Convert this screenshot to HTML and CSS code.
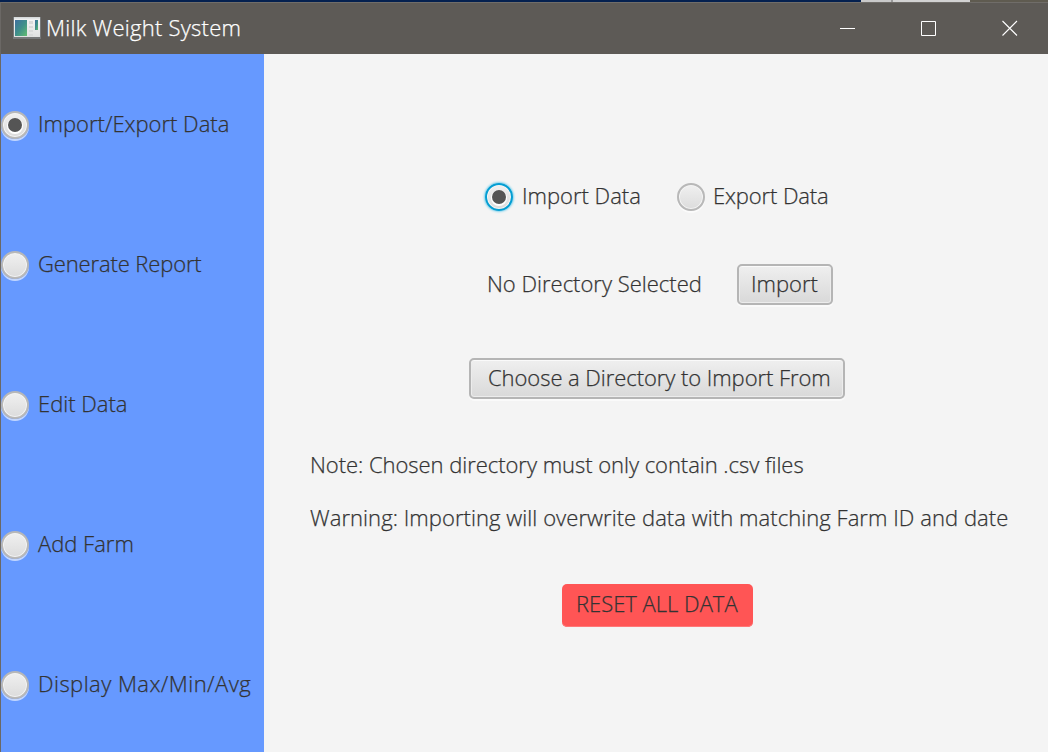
FILE: index.html
```html
<!DOCTYPE html>
<html lang="en">
<head>
<meta charset="utf-8">
<title>Milk Weight System</title>
<link rel="stylesheet" href="styles.css">
</head>
<body>
<div class="desktop-strip"><i class="strip-navy"></i><i class="strip-light"></i><i class="strip-edge"></i><i class="strip-pale"></i><i class="strip-dark"></i></div>
<header class="titlebar">
  <svg class="app-icon" width="28" height="24" viewBox="0 0 28 24">
    <defs>
      <linearGradient id="screen" x1="0" y1="0" x2="1" y2="1"><stop offset="0" stop-color="#3f6f9f"/><stop offset=".5" stop-color="#3f8f8b"/><stop offset="1" stop-color="#62bd70"/></linearGradient>
      <linearGradient id="frame" x1="0" y1="0" x2="0" y2="1"><stop offset="0" stop-color="#cfd3d5"/><stop offset=".15" stop-color="#f4f5f5"/><stop offset="1" stop-color="#e0e1e1"/></linearGradient>
    </defs>
    <rect x="0" y="1" width="28" height="22" fill="#77797a"/>
    <rect x="1" y="1" width="26" height="20" fill="url(#frame)"/>
    <rect x="2" y="4" width="12" height="16" fill="url(#screen)"/>
    <path d="M16 5h4v3h-4zM16 10h4v2h-4zM16 14h4v2h-4zM16 18h4v2h-4z" fill="#d9dbdb"/>
    <rect x="22" y="4" width="3" height="10" fill="url(#screen)"/>
  </svg>
  <span class="title">Milk Weight System</span>
  <div class="controls">
    <svg width="16" height="16" viewBox="0 0 16 16"><path d="M0 8.5h15" stroke="#fff" fill="none"/></svg>
    <svg width="16" height="16" viewBox="0 0 16 16"><path d="M.5 1.5h14v14H.5z" stroke="#fff" fill="none"/></svg>
    <svg width="16" height="16" viewBox="0 0 16 16"><path d="M.5 1l14.5 14.5M15 1L.5 15.5" stroke="#fff" stroke-width="1.1" fill="none"/></svg>
  </div>
</header>
<div class="window-body">
  <nav class="sidebar">
    <label class="option"><span class="radio selected"></span><span>Import/Export Data</span></label>
    <label class="option"><span class="radio"></span><span class="t-report">Generate Report</span></label>
    <label class="option"><span class="radio"></span><span>Edit Data</span></label>
    <label class="option"><span class="radio"></span><span>Add Farm</span></label>
    <label class="option"><span class="radio"></span><span class="t-display">Display Max/Min/Avg</span></label>
  </nav>
  <main class="content">
    <div class="mode-row">
      <label class="option mode-import"><span class="radio selected focused"></span><span>Import Data</span></label>
      <label class="option mode-export"><span class="radio"></span><span>Export Data</span></label>
    </div>
    <div class="directory-row">
      <span class="directory">No Directory Selected</span>
      <button class="button import">Import</button>
    </div>
    <button class="button choose">Choose a Directory to Import From</button>
    <p class="note">Note: Chosen directory must only contain .csv files</p>
    <p class="warning">Warning: Importing will overwrite data with matching Farm ID and date</p>
    <button class="button reset">RESET ALL DATA</button>
  </main>
</div>
</body>
</html>
```
FILE: styles.css
```css
* { box-sizing: border-box; }
body {
  margin: 0;
  width: 1048px;
  height: 752px;
  overflow: hidden;
  display: flex;
  flex-direction: column;
  background: #f4f4f4;
  color: #333;
  font: 300 22px/30px "Open Sans", "Noto Sans", sans-serif;
  -webkit-text-stroke: .25px currentColor;
  white-space: nowrap;
}
.desktop-strip { display: flex; height: 2px; flex: none; }
.strip-navy { width: 861px; background: #04204f; }
.strip-light { width: 30px; background: #c9c9c9; }
.strip-edge { width: 2px; background: #999; }
.strip-pale { width: 77px; background: #d2d2d2; }
.strip-dark { flex: 1; background: #5f5b50; }
.titlebar {
  display: flex;
  flex: none;
  align-items: center;
  height: 52px;
  padding: 0 30px 2px 13px;
  background: #5d5a56;
  border-top: 1px solid #706d69;
  border-left: 1px solid #6b6865;
  color: #fff;
}
.app-icon { display: block; margin-right: 5px; margin-left: -1px; }
.title { padding-bottom: 2px; letter-spacing: .25px; }
.controls { display: flex; gap: 65px; margin-left: auto; }
.controls svg { display: block; }
.window-body { display: flex; flex: 1; border-left: 1px solid #6b6865; }
.sidebar {
  width: 263px;
  padding-top: 56px;
  display: flex;
  flex-direction: column;
  gap: 110px;
  background: #6699ff;
}
.option { display: flex; align-items: center; height: 30px; gap: 9px; }
.option span:last-child { padding-bottom: 4px; }
.t-report { letter-spacing: -.13px; }
.t-display { letter-spacing: .45px; }
.radio {
  width: 28px;
  height: 28px;
  flex: none;
  border-radius: 50%;
  border: 2px solid #b8b8b8;
  background: linear-gradient(#f0f0f0, #dcdcdc);
  box-shadow: inset 0 0 0 1px #f4f4f4, 0 2px 0 rgba(255, 255, 255, .6);
  display: grid;
  place-items: center;
}
.selected::after { content: ""; width: 14px; height: 14px; border-radius: 50%; background: #555; box-shadow: 0 1px 0 1px #fff; }
.focused { border-color: #039ed3; box-shadow: inset 0 0 0 1px #f4f4f4, 0 0 2px 1px #7fd3ee; }
.content { flex: 1; display: flex; flex-direction: column; align-items: flex-start; padding-top: 128px; }
.mode-row { display: flex; padding-left: 221px; }
.mode-import { width: 192px; }
.mode-export { letter-spacing: -.12px; gap: 8px; }
.directory-row { display: flex; align-items: center; margin-top: 52px; padding-left: 223px; }
.directory { width: 250px; padding-bottom: 3px; }
.button {
  height: 41px;
  padding: 0 0 4px;
  border: 2px solid #b5b5b5;
  border-radius: 5px;
  background: linear-gradient(#efefef, #d9d9d9);
  box-shadow: inset 0 1px 0 #fafafa, inset 0 0 0 1px #ececec, 0 2px 0 #fafafa;
  color: #333;
  font: inherit;
  text-align: left;
}
.import { width: 96px; padding-left: 12px; }
.choose { width: 376px; margin: 53px 0 0 205px; padding-left: 17px; letter-spacing: -.06px; }
.note { margin: 50px 0 0 46px; letter-spacing: -.04px; }
.warning { margin: 23px 0 0 46px; letter-spacing: .06px; }
.reset { width: 191px; height: 43px; margin: 52px 0 0 298px; padding: 0 0 5px 14px; border: 0; background: #ff5555; box-shadow: inset 0 -1px #ff7777; }
```
